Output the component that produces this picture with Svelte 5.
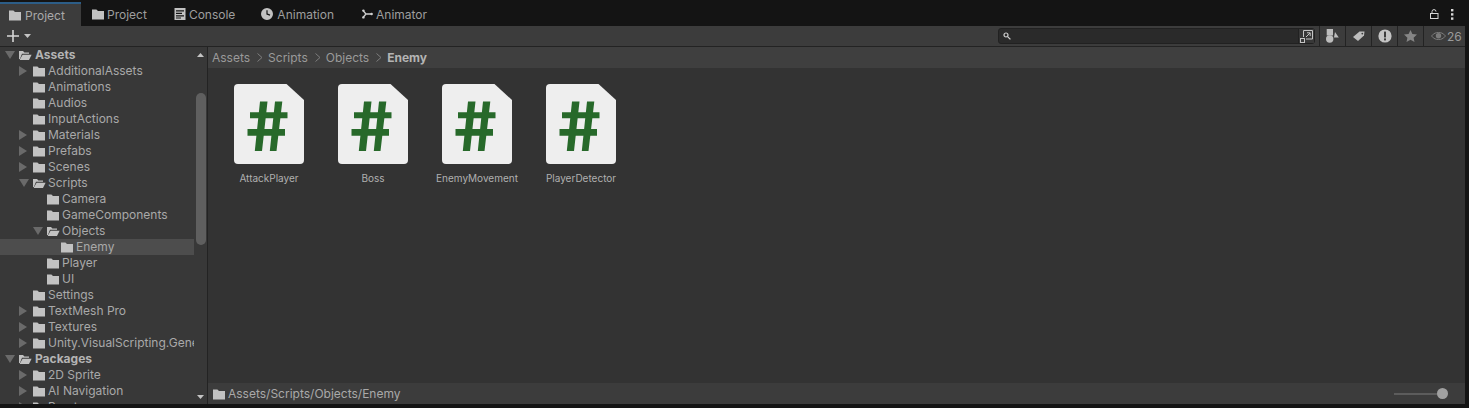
<script>
  const rows = [
    { n: 'Assets', d: 0, a: 'open', b: true },
    { n: 'AdditionalAssets', d: 1, a: 'closed' },
    { n: 'Animations', d: 1 },
    { n: 'Audios', d: 1 },
    { n: 'InputActions', d: 1 },
    { n: 'Materials', d: 1, a: 'closed' },
    { n: 'Prefabs', d: 1, a: 'closed' },
    { n: 'Scenes', d: 1, a: 'closed' },
    { n: 'Scripts', d: 1, a: 'open' },
    { n: 'Camera', d: 2 },
    { n: 'GameComponents', d: 2 },
    { n: 'Objects', d: 2, a: 'open' },
    { n: 'Enemy', d: 3, sel: true },
    { n: 'Player', d: 2 },
    { n: 'UI', d: 2 },
    { n: 'Settings', d: 1 },
    { n: 'TextMesh Pro', d: 1, a: 'closed' },
    { n: 'Textures', d: 1, a: 'closed' },
    { n: 'Unity.VisualScripting.Generated', d: 1, a: 'closed' },
    { n: 'Packages', d: 0, a: 'open', b: true },
    { n: '2D Sprite', d: 1, a: 'closed' },
    { n: 'AI Navigation', d: 1, a: 'closed' },
    { n: 'Burst', d: 1, a: 'closed' }
  ];
  const files = ['AttackPlayer', 'Boss', 'EnemyMovement', 'PlayerDetector'];
  const crumbs = ['Assets', 'Scripts', 'Objects'];
</script>

{#snippet folder(open)}
  {#if open}
    <svg class="fold" viewBox="0 0 14 12" width="14" height="12"><path d="M1 2h4l1.4 1.4H11v1.4H4L1.9 10H1z M4.6 5.8H13.600L11 11H1.600z" fill="#c2c2c2"/></svg>
  {:else}
    <svg class="fold" viewBox="0 0 14 12" width="14" height="12"><path d="M1 1.5h4.4L7 3h6v8.500H1z" fill="#c2c2c2"/></svg>
  {/if}
{/snippet}

<div class="win">
  <div class="tabbar">
    <div class="tab active">{@render folder(false)}<span>Project</span></div>
    <div class="tab">{@render folder(false)}<span>Project</span></div>
    <div class="tab console">
      <svg viewBox="0 0 12 12" width="12" height="12"><path d="M.5 0h11v12H.5z M2 2.200v1.200h8V2.200z M2 4.800V6h6V4.800z M2 7.200v1.200h8V7.200z M2 9.400v1h5v-1z" fill="#c2c2c2" fill-rule="evenodd"/></svg>
      <span>Console</span>
    </div>
    <div class="tab anim">
      <svg viewBox="0 0 12 12" width="12" height="12"><path d="M6 0a6 6 0 1 0 0 12A6 6 0 0 0 6 0z M5.400 2.200h1.200v3.400l2.600 1-.4 1.100-3.400-1.300z" fill="#c2c2c2" fill-rule="evenodd"/></svg>
      <span>Animation</span>
    </div>
    <div class="tab animator">
      <svg viewBox="0 0 11 10" width="11" height="10"><path d="M1 1.500 4 5 1 8.500M4 5h6.200" fill="none" stroke="#d0d0d0" stroke-width="1.300"/><circle cx="1.400" cy="1.600" r="1.200" fill="#d0d0d0"/><circle cx="1.400" cy="8.400" r="1.200" fill="#d0d0d0"/><circle cx="9.600" cy="5" r="1.200" fill="#d0d0d0"/></svg>
      <span>Animator</span>
    </div>
    <div class="winctl">
      <svg viewBox="0 0 9 10" width="9" height="10"><path d="M2 4.500V2.600a2 2 0 0 1 4 0" fill="none" stroke="#d8d8d8"/><rect x=".5" y="4.500" width="7.500" height="5" fill="none" stroke="#d8d8d8"/></svg>
      <svg viewBox="0 0 3 11" width="3" height="11"><rect y="0" width="2.400" height="2.400" fill="#d8d8d8"/><rect y="4.200" width="2.400" height="2.400" fill="#d8d8d8"/><rect y="8.400" width="2.400" height="2.400" fill="#d8d8d8"/></svg>
    </div>
  </div>

  <div class="panel">
    <div class="toolbar">
      <svg class="plus" viewBox="0 0 12 12" width="12" height="12"><path d="M6 0v12M0 6h12" stroke="#d6d6d6" stroke-width="1.600"/></svg>
      <svg class="caret" viewBox="0 0 7 4" width="7" height="4"><path d="M0 0h7L3.500 4z" fill="#c4c4c4"/></svg>
      <div class="grow"></div>
      <div class="search">
        <svg class="mag" viewBox="0 0 8 8" width="8" height="8"><circle cx="3" cy="3" r="2" fill="none" stroke="#d0d0d0" stroke-width="1.200"/><path d="M4.600 4.600 7.400 7.400" stroke="#d0d0d0" stroke-width="1.300"/></svg>
        <div class="grow"></div>
        <div class="sbtn">
          <svg viewBox="0 0 13 13" width="13" height="13"><path d="M3.500 7V.5h9v8.500H6" fill="none" stroke="#c4c4c4"/><rect x=".5" y="8.500" width="4" height="4" fill="none" stroke="#c4c4c4"/><path d="M6 7 10 3M7 2.800h3.200V6" fill="none" stroke="#c4c4c4"/></svg>
        </div>
      </div>
      <div class="tool">
        <svg viewBox="0 0 13 14" width="13" height="14"><rect x=".7" y="0" width="6.300" height="6.500" fill="#bdbdbd"/><circle cx="3.700" cy="10" r="3.700" fill="#bdbdbd"/><path d="M9 3 12.800 8.500H8z" fill="#bdbdbd"/></svg>
      </div>
      <div class="tool">
        <svg viewBox="0 0 12 10" width="12" height="10"><path d="M0 6 6.500 .5h5L11 4.500 5 10z" fill="#bdbdbd"/><circle cx="9.300" cy="2.600" r=".9" fill="#3c3c3c"/></svg>
      </div>
      <div class="tool">
        <svg viewBox="0 0 14 14" width="14" height="14"><circle cx="7" cy="7" r="6.600" fill="#c4c4c4"/><rect x="6" y="2.600" width="2" height="5.800" fill="#3c3c3c"/><rect x="6" y="9.400" width="2" height="2" fill="#3c3c3c"/></svg>
      </div>
      <div class="tool">
        <svg viewBox="0 0 13 12" width="13" height="12"><path d="M6.500 0 8.400 4.100 13 4.600 9.600 7.700 10.500 12 6.500 9.800 2.500 12 3.400 7.700 0 4.600 4.600 4.100z" fill="#858585"/></svg>
      </div>
      <div class="tool eye">
        <svg viewBox="0 0 15 8" width="15" height="8"><path d="M.5 4C3 1 5 .5 7.500.5S12 1 14.500 4C12 7 10 7.500 7.500 7.500S3 7 .5 4z" fill="none" stroke="#7c7c7c"/><circle cx="7.500" cy="3.800" r="2.700" fill="#7c7c7c"/></svg>
        <span>26</span>
      </div>
    </div>

    <div class="body">
      <div class="side">
        <div class="tree">
          {#each rows as r}
            <div class="row" class:sel={r.sel} style="padding-left:{r.d * 14 + 4}px">
              <span class="arrow">
                {#if r.a === 'open'}
                  <svg viewBox="0 0 10 8" width="10" height="8"><path d="M0 0h10L5 8z" fill="#6a6a6a"/></svg>
                {:else if r.a === 'closed'}
                  <svg viewBox="0 0 8 10" width="8" height="10"><path d="M0 0l8 5-8 5z" fill="#6a6a6a"/></svg>
                {/if}
              </span>
              {@render folder(r.a === 'open')}
              <span class="rlabel" class:bold={r.b}>{r.n}</span>
            </div>
          {/each}
        </div>
        <div class="scroll">
          <svg viewBox="0 0 7 4" width="7" height="4"><path d="M0 4h7L3.500 0z" fill="#c4c4c4"/></svg>
          <div class="track"><div class="thumb"></div></div>
          <svg viewBox="0 0 7 4" width="7" height="4"><path d="M0 0h7L3.500 4z" fill="#c4c4c4"/></svg>
        </div>
      </div>

      <div class="main">
        <div class="crumbs">
          {#each crumbs as c}
            <span>{c}</span>
            <svg viewBox="0 0 6 9" width="6" height="9"><path d="M.5.5 5 4.500.5 8.500" fill="none" stroke="#7d7d7d"/></svg>
          {/each}
          <span class="cur">Enemy</span>
        </div>
        <div class="grid">
          {#each files as f}
            <div class="item">
              <svg viewBox="0 0 70 80" width="70" height="80">
                <path d="M4 0H52.500L70 16V76a4 4 0 0 1-4 4H4a4 4 0 0 1-4-4V4a4 4 0 0 1 4-4z" fill="#eeeeee"/>
                <path d="M16 28.300H53.500V34.300H16zM13.500 45H51V51.700H13.500z" fill="#27692a"/>
                <path d="M26 17.500H33.500L28 67H20.800zM41 17.500H48.300L42.500 67H35.800z" fill="#27692a"/>
              </svg>
              <span>{f}</span>
            </div>
          {/each}
        </div>
        <div class="foot">
          {@render folder(false)}
          <span>Assets/Scripts/Objects/Enemy</span>
          <div class="grow"></div>
          <div class="slider"><div class="knob"></div></div>
        </div>
      </div>
    </div>
  </div>
</div>

<style>
  :global(body) { margin: 0; background: #141414; }
  .win {
    width: 1469px; height: 408px; overflow: hidden; background: #141414;
    display: flex; flex-direction: column;
    font-family: Inter, "Liberation Sans", sans-serif; font-size: 12px; color: #a9a9a9;
  }
  svg { flex: none; display: block; }
  .grow { flex: 1; }

  .tabbar { height: 26px; display: flex; align-items: stretch; flex: none; color: #9e9e9e; }
  .tab { display: flex; align-items: center; gap: 2px; padding: 2px 16px 0 10px; }
  .tab.active { width: 81px; box-sizing: border-box; padding: 0 0 0 8px; gap: 3px; background: #3c3c3c; border-top: 2px solid #2c5d87; margin-top: 2px; height: 24px; color: #a9a9a9; }
  .tab.console { padding-left: 11px; padding-right: 26px; gap: 3px; }
  .tab.anim { padding-left: 0; padding-right: 28px; gap: 4px; }
  .tab.animator { gap: 3px; padding-left: 0; }
  .winctl { margin-left: auto; display: flex; align-items: center; gap: 12px; padding: 2px 0 0; margin-right: 15px; }

  .panel { flex: none; height: 378px; width: 1465px; display: flex; flex-direction: column; background: #3c3c3c; }
  .toolbar { height: 20px; flex: none; display: flex; align-items: center; padding-left: 7px; border-bottom: 1px solid #232323; }
  .caret { margin-left: 5px; }
  .search {
    width: 317px; height: 16px; box-sizing: border-box; margin-right: 4px; display: flex; align-items: center;
    background: #2a2a2a; border: 1px solid #212121; border-radius: 3px; padding-left: 4px;
  }
  .sbtn { width: 16px; height: 14px; box-sizing: border-box; background: #383838; border-left: 1px solid #212121; display: flex; align-items: center; justify-content: center; }
  .tool { width: 26px; height: 20px; box-sizing: border-box; border-left: 1px solid #232323; display: flex; align-items: center; justify-content: center; flex: none; }
  .tool.eye { width: 42px; gap: 1px; color: #9a9a9a; font-size: 12px; justify-content: flex-start; padding-left: 7px; }

  .body { flex: 1; display: flex; min-height: 0; }
  .side { width: 208px; flex: none; box-sizing: border-box; display: flex; background: #383838; border-right: 1px solid #232323; }
  .tree { width: 194px; flex: none; overflow: hidden; }
  .row { height: 16px; display: flex; align-items: center; white-space: nowrap; overflow: hidden; }
  .row.sel { background: #4d4d4d; }
  .arrow { width: 14px; flex: none; display: flex; justify-content: flex-start; align-items: center; margin-left: 1px; margin-right: -1px; }
  .rlabel { margin-left: 2px; line-height: 16px; }
  .bold { font-weight: 700; color: #b4b4b4; margin-left: 3px; }
  .scroll { flex: 1; display: flex; flex-direction: column; align-items: center; padding: 6px 0 5px; }
  .track { flex: 1; width: 100%; }
  .thumb { width: 10px; height: 152px; margin: 36px 0 0 2px; background: #5f5f5f; border-radius: 5px; }

  .main { flex: 1; display: flex; flex-direction: column; background: #333333; }
  .crumbs { height: 21px; box-sizing: border-box; padding: 0 0 1px 4px; flex: none; background: #3f3f3f; display: flex; align-items: center; gap: 5px; color: #9a9a9a; }
  .crumbs svg { margin-left: 2px; }
  .cur { font-weight: 700; color: #b4b4b4; }
  .grid { flex: 1; display: flex; padding-top: 16px; padding-left: 9px; align-items: flex-start; }
  .item { width: 104px; display: flex; flex-direction: column; align-items: center; font-size: 10px; color: #b0b0b0; gap: 8px; }
  .item span { line-height: 12px; white-space: nowrap; }
  .foot { height: 21px; flex: none; background: #3c3c3c; display: flex; align-items: center; padding-left: 4px; gap: 2px; color: #a9a9a9; }
  .slider { width: 54px; height: 2px; background: #5c5c5c; margin-right: 17px; position: relative; }
  .knob { position: absolute; right: 0; top: -4.5px; width: 11px; height: 11px; border-radius: 50%; background: #a0a0a0; }
</style>
